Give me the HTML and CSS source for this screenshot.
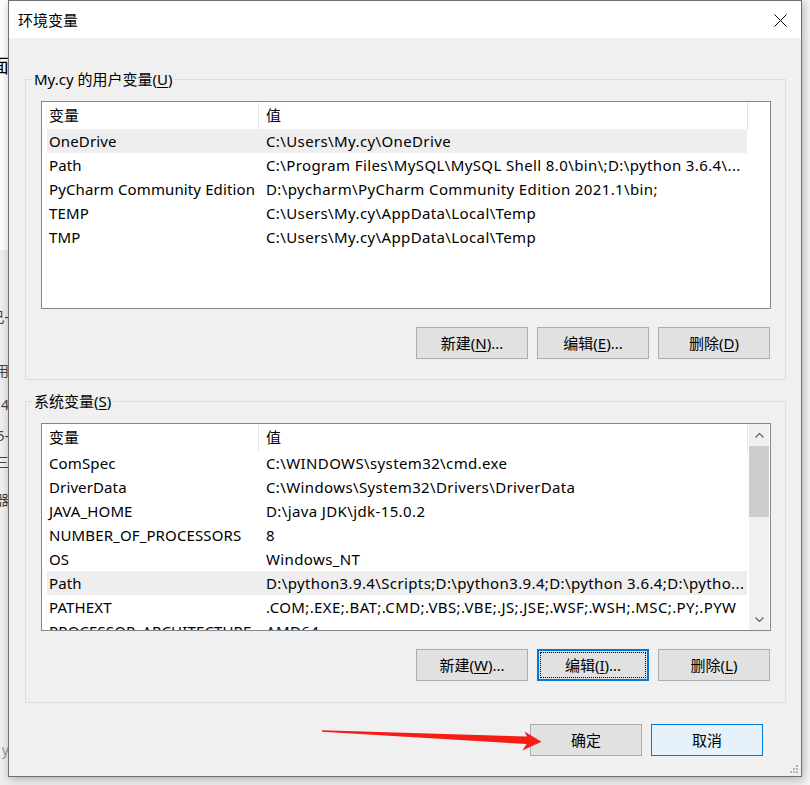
FILE: index.html
```html
<!DOCTYPE html>
<html lang="zh-CN">
<head>
<meta charset="utf-8">
<title>环境变量</title>
<link rel="stylesheet" href="styles.css">
</head>
<body>
<div class="desktop">
  <div class="bgwin">
    <div class="frag f1">面</div>
    <div class="frag f2">己-</div>
    <div class="frag f3">用</div>
    <div class="frag f4">4</div>
    <div class="frag f5">5-</div>
    <div class="frag f6">三</div>
    <div class="frag f7">器</div>
    <div class="frag f8">y</div>
  </div>

  <div class="dialog">
    <div class="titlebar">
      <span class="title">环境变量</span>
      <svg class="close" width="13" height="13" viewBox="0 0 13 13"><path d="M0.5 0.5 L12.5 12.5 M12.5 0.5 L0.5 12.5" stroke="#000" stroke-width="1" fill="none"/></svg>
    </div>

    <div class="content">
      <fieldset class="group g1">
        <legend>My.cy 的用户变量(<u>U</u>)</legend>
        <div class="list">
          <div class="lvwrap">
            <div class="hdr"><div class="c1">变量</div><div class="c2">值</div></div>
            <div class="row sel"><div class="c1">OneDrive</div><div class="c2">C:\Users\My.cy\OneDrive</div></div>
            <div class="row"><div class="c1">Path</div><div class="c2">C:\Program Files\MySQL\MySQL Shell 8.0\bin\;D:\python 3.6.4\...</div></div>
            <div class="row"><div class="c1">PyCharm Community Edition</div><div class="c2">D:\pycharm\PyCharm Community Edition 2021.1\bin;</div></div>
            <div class="row"><div class="c1">TEMP</div><div class="c2">C:\Users\My.cy\AppData\Local\Temp</div></div>
            <div class="row"><div class="c1">TMP</div><div class="c2">C:\Users\My.cy\AppData\Local\Temp</div></div>
          </div>
        </div>
        <div class="btns">
          <button class="btn">新建(<u>N</u>)...</button>
          <button class="btn">编辑(<u>E</u>)...</button>
          <button class="btn">删除(<u>D</u>)</button>
        </div>
      </fieldset>

      <fieldset class="group g2">
        <legend>系统变量(<u>S</u>)</legend>
        <div class="list">
          <div class="lvwrap">
            <div class="hdr"><div class="c1">变量</div><div class="c2">值</div></div>
            <div class="row"><div class="c1">ComSpec</div><div class="c2">C:\WINDOWS\system32\cmd.exe</div></div>
            <div class="row"><div class="c1">DriverData</div><div class="c2">C:\Windows\System32\Drivers\DriverData</div></div>
            <div class="row"><div class="c1">JAVA_HOME</div><div class="c2">D:\java JDK\jdk-15.0.2</div></div>
            <div class="row"><div class="c1">NUMBER_OF_PROCESSORS</div><div class="c2">8</div></div>
            <div class="row"><div class="c1">OS</div><div class="c2">Windows_NT</div></div>
            <div class="row sel"><div class="c1">Path</div><div class="c2">D:\python3.9.4\Scripts;D:\python3.9.4;D:\python 3.6.4;D:\pytho...</div></div>
            <div class="row"><div class="c1">PATHEXT</div><div class="c2">.COM;.EXE;.BAT;.CMD;.VBS;.VBE;.JS;.JSE;.WSF;.WSH;.MSC;.PY;.PYW</div></div>
            <div class="row"><div class="c1">PROCESSOR_ARCHITECTURE</div><div class="c2">AMD64</div></div>
          </div>
          <div class="scrollbar">
            <div class="arrowbtn"><svg width="9" height="5" viewBox="0 0 9 5"><path d="M0.5 4.5 L4.5 0.5 L8.5 4.5" stroke="#606060" stroke-width="1.2" fill="none"/></svg></div>
            <div class="thumb"></div>
            <div class="track"></div>
            <div class="arrowbtn"><svg width="9" height="5" viewBox="0 0 9 5"><path d="M0.5 0.5 L4.5 4.5 L8.5 0.5" stroke="#606060" stroke-width="1.2" fill="none"/></svg></div>
          </div>
        </div>
        <div class="btns">
          <button class="btn">新建(<u>W</u>)...</button>
          <button class="btn focus">编辑(<u>I</u>)...</button>
          <button class="btn">删除(<u>L</u>)</button>
        </div>
      </fieldset>

      <div class="footer">
        <button class="btn">确定</button>
        <button class="btn default">取消</button>
      </div>
    </div>

    <svg class="grip" width="10" height="10" viewBox="0 0 10 10">
      <rect x="7" y="1" width="2" height="2" fill="#b4b4b4"/>
      <rect x="4" y="4" width="2" height="2" fill="#b4b4b4"/>
      <rect x="7" y="4" width="2" height="2" fill="#b4b4b4"/>
      <rect x="1" y="7" width="2" height="2" fill="#b4b4b4"/>
      <rect x="4" y="7" width="2" height="2" fill="#b4b4b4"/>
      <rect x="7" y="7" width="2" height="2" fill="#b4b4b4"/>
    </svg>
  </div>

  <svg class="arrow" width="810" height="785" viewBox="0 0 810 785">
    <path d="M322 730.2 L527 736.5 L524.5 731.5 L541.5 741.8 L522.5 750.5 L526.5 744 L322 731.8 Z" fill="#f51d16"/>
  </svg>
</div>
</body>
</html>
```

FILE: styles.css
```css
* { box-sizing: border-box; }

html, body {
  margin: 0;
  padding: 0;
}

body {
  width: 810px;
  height: 785px;
  overflow: hidden;
  background: #eeeeee;
  font-family: "Noto Sans", "Noto Sans CJK SC", sans-serif;
  font-size: 15px;
  color: #000;
}

.desktop {
  position: relative;
  width: 810px;
  height: 785px;
  background: linear-gradient(90deg, #eeeeee 0 800px, #f4f4f4 810px);
}

/* window behind the dialog */
.bgwin {
  position: absolute;
  left: -30px;
  top: 0;
  width: 50px;
  height: 777px;
  background: linear-gradient(#ffffff 0 250px, #f0f0f0 250px);
  display: flex;
  flex-direction: column;
  align-items: flex-end;
  padding-right: 11px;
}

.frag {
  height: 20px;
  line-height: 20px;
  color: #444;
  font-size: 14px;
  white-space: nowrap;
}
.f1 { margin-top: 56px; color: #000; font-size: 19px; }
.f2 { margin-top: 231px; }
.f3 { margin-top: 34px; }
.f4 { margin-top: 14px; }
.f5 { margin-top: 11px; }
.f6 { margin-top: 6px; }
.f7 { margin-top: 18px; }
.f8 { margin-top: 230px; color: #999; }

/* dialog */
.dialog {
  position: absolute;
  left: 8px;
  top: 0;
  width: 794px;
  height: 777px;
  border: 1px solid #6f6f6f;
  background: #f0f0f0;
  box-shadow: 1px 2px 9px rgba(0, 0, 0, 0.28);
  display: flex;
  flex-direction: column;
}

.titlebar {
  height: 37px;
  flex: none;
  background: #fff;
  display: flex;
  align-items: center;
  justify-content: space-between;
  padding-left: 9px;
  padding-right: 14px;
  padding-top: 1px;
}

.title {
  font-size: 15px;
  line-height: 20px;
}

.close {
  display: block;
}

.content {
  flex: 1;
  display: flex;
  flex-direction: column;
  padding: 0 15px 0 16px;
}

.group {
  margin: 0;
  border: 1px solid #dcdcdc;
  padding: 12px 14px 20px 15px;
  min-width: 0;
}

.g1 { margin-top: 31px; }
.g2 { margin-top: 11px; padding-bottom: 21px; }

.group legend {
  padding: 0 2px;
  margin-left: -9px;
  line-height: 20px;
  height: 20px;
  font-size: 15px;
}

u { text-decoration-thickness: 1px; text-underline-offset: 2px; }

/* list view */
.list {
  height: 208px;
  border: 1px solid #828790;
  background: #fff;
  display: flex;
  overflow: hidden;
}

.lvwrap {
  width: 706px;
  flex: none;
  overflow: hidden;
}

.hdr {
  height: 27px;
  display: flex;
  padding-left: 5px;
  border-right: 1px solid #e5e5e5;
  line-height: 27px;
}

.hdr .c1 {
  width: 211px;
  flex: none;
  padding-left: 2px;
}

.hdr .c2 {
  flex: 1;
  border-left: 1px solid #e5e5e5;
  padding-left: 7px;
  margin-top: 1px;
  line-height: 25px;
}

.row {
  margin-left: 5px;
  width: 700px;
  height: 24px;
  line-height: 24px;
  display: flex;
  white-space: nowrap;
}

.row.sel { background: #eeeeee; }

.row .c1 {
  width: 211px;
  flex: none;
  padding-left: 2px;
  overflow: hidden;
  letter-spacing: 0.12px;
}

.row .c2 {
  flex: 1;
  min-width: 0;
  padding-left: 8px;
  overflow: hidden;
  letter-spacing: 0.38px;
}

.scrollbar {
  width: 20px;
  flex: none;
  margin-left: 1px;
  background: #f0f0f0;
  display: flex;
  flex-direction: column;
}

.arrowbtn {
  height: 22px;
  flex: none;
  display: flex;
  align-items: center;
  justify-content: center;
}
.arrowbtn svg { display: block; }

.thumb {
  height: 71px;
  flex: none;
  background: #cdcdcd;
}

.track { flex: 1; }

/* buttons */
.btns {
  margin-top: 18px;
  display: flex;
  justify-content: flex-end;
  gap: 9px;
  padding-right: 1px;
}

.btn {
  width: 112px;
  height: 32px;
  border: 1px solid #adadad;
  background: #e1e1e1;
  font-family: "Noto Sans", "Noto Sans CJK SC", sans-serif;
  font-size: 15px;
  color: #000;
  padding: 0;
  line-height: 20px;
}

.btn.focus {
  border: 2px solid #0078d7;
  outline: 1px dotted #000;
  outline-offset: -4px;
}

.btn.default {
  border: 1px solid #0078d7;
  background: #e5f1fb;
}

.footer {
  margin-top: 21px;
  display: flex;
  justify-content: flex-end;
  gap: 9px;
  padding-right: 23px;
}

.grip {
  position: absolute;
  right: 2px;
  bottom: 2px;
}

.arrow {
  position: absolute;
  left: 0;
  top: 0;
  pointer-events: none;
}
```
